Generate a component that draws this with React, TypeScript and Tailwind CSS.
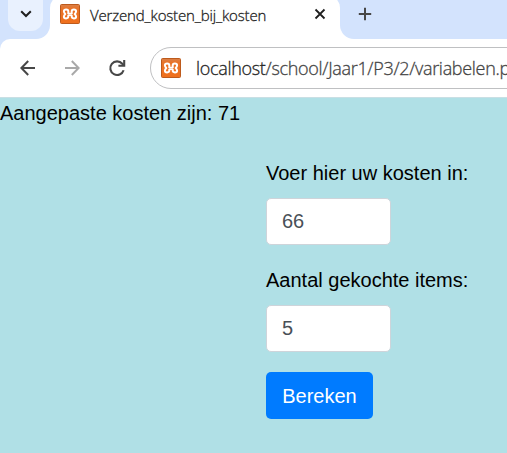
function Logo() {
  return (
    <svg width="20" height="20" viewBox="0 0 20 20" className="block shrink-0">
      <defs>
        <linearGradient id="xampp" x1="0" y1="0" x2="0" y2="1">
          <stop offset="0" stopColor="#d9814a" />
          <stop offset="0.2" stopColor="#e8742a" />
          <stop offset="1" stopColor="#f0701c" />
        </linearGradient>
      </defs>
      <rect x="0.5" y="0.5" width="19" height="19" rx="1" fill="url(#xampp)" stroke="#bd5a1c" />
      <g fill="none" stroke="#fff" strokeWidth="2" strokeLinejoin="round" strokeLinecap="round">
        <path d="M8.3 9V7.4C8.3 5 4 5 3.9 7.3C3.9 8.6 4.5 9.3 5.3 10C4.5 10.7 3.9 11.4 3.9 12.7C4 15 8.3 15 8.3 12.6V12" />
        <path d="M11.7 9V7.4C11.7 5 16 5 16.1 7.3C16.1 8.6 15.5 9.3 14.7 10C15.5 10.7 16.1 11.4 16.1 12.7C16 15 11.7 15 11.7 12.6V12" />
        <path d="M8.2 9.5H11.8M8.2 11.2H11.8" strokeWidth="1.6" />
      </g>
    </svg>
  );
}

function TabStrip() {
  return (
    <div className="flex h-[39px] bg-white">
      <div className="w-[50px] rounded-br-[14px] bg-[#d3e3fd] pl-2">
        <button className="flex h-[31px] w-[35px] items-center justify-center rounded-b-[12px] bg-[#e9f1fe]">
          <svg width="12" height="8" viewBox="0 0 12 8" className="-mt-[3px]" fill="none" stroke="#1f1f1f" strokeWidth="2">
            <path d="M1.2 1.2L6 6L10.8 1.2" />
          </svg>
        </button>
      </div>
      <div className="w-[290px] bg-[linear-gradient(#d3e3fd_12px,#fff_12px)]">
        <div className="-mt-[5px] flex h-[44px] items-start rounded-t-[13px] bg-white pt-[9px] pl-[10px]">
          <Logo />
          <span className="ml-[10px] w-[220px] whitespace-nowrap text-[15px] font-light leading-[22px] tracking-[-0.16px] text-[#1f1f1f] [-webkit-text-stroke:0.3px]">
            Verzend_kosten_bij_kosten
          </span>
          <svg width="12" height="12" viewBox="0 0 12 12" className="mt-[4px] ml-[4px]" stroke="#1f1f1f" strokeWidth="1.8">
            <path d="M1.5 1.5L10.5 10.5M10.5 1.5L1.5 10.5" />
          </svg>
        </div>
      </div>
      <div className="flex-1 rounded-bl-[14px] bg-[#d3e3fd] pt-[7px] pl-[18px]">
        <svg width="14" height="14" viewBox="0 0 14 14" stroke="#474747" strokeWidth="2">
          <path d="M7 .8V13.2M.8 7H13.2" />
        </svg>
      </div>
    </div>
  );
}

function Toolbar() {
  return (
    <div className="bg-[#d3e3fd]">
      <div className="flex h-[59px] items-center rounded-tl-[10px] border-b border-[#c9dfe4] bg-white pl-[20px]">
        <svg width="16" height="16" viewBox="0 0 16 16" className="shrink-0" fill="none" stroke="#474747" strokeWidth="2">
          <path d="M15 8H2M8.2 1L1.4 8L8.2 15" />
        </svg>
        <svg width="16" height="16" viewBox="0 0 16 16" className="ml-[28px] shrink-0" fill="none" stroke="#a9a9a9" strokeWidth="2">
          <path d="M1 8H14M7.8 1L14.6 8L7.8 15" />
        </svg>
        <svg width="18" height="18" viewBox="0 0 18 18" className="ml-[28px] shrink-0" fill="none" stroke="#474747" strokeWidth="2.1">
          <path d="M15.6 11.2A6.8 6.8 0 1 1 14.3 4.8L16 6.5" />
          <path d="M16.2 1V6.8H10.4" />
        </svg>
        <div className="ml-[24px] flex h-[42px] w-[400px] shrink-0 items-center rounded-full border border-[#bfc0c2] pl-[10px]">
          <Logo />
          <span className="ml-[15px] whitespace-nowrap text-[18px] font-light leading-[26px] tracking-[-0.31px] text-[#444] [-webkit-text-stroke:0.3px]">
            <span className="text-[#1f1f1f]">localhost</span>/school/Jaar1/P3/2/variabelen.p
          </span>
        </div>
      </div>
    </div>
  );
}

export default function App() {
  return (
    <div className="h-[453px] w-[507px] overflow-hidden bg-[#b0e0e6]">
      <div className="font-['Open_Sans',sans-serif]">
        <TabStrip />
        <Toolbar />
      </div>
      <main className="font-['Liberation_Sans',Arial,sans-serif] text-[20px] leading-[30px] text-black">
        <p className="h-[60px]">Aangepaste kosten zijn: 71</p>
        <form className="flex flex-col items-start pl-[266px]">
          <label className="whitespace-nowrap">Voer hier uw kosten in:</label>
          <input
            className="mt-[10px] h-[47px] w-[125px] rounded-[5px] border border-[#ced4da] bg-white px-[15px] text-[#495057]"
            defaultValue="66"
          />
          <label className="mt-[20px] whitespace-nowrap">Aantal gekochte items:</label>
          <input
            className="mt-[10px] h-[47px] w-[125px] rounded-[5px] border border-[#ced4da] bg-white px-[15px] text-[#495057]"
            defaultValue="5"
          />
          <button type="button" className="mt-[20px] h-[47px] w-[107px] rounded-[5px] bg-[#007bff] text-white">
            Bereken
          </button>
        </form>
      </main>
    </div>
  );
}
